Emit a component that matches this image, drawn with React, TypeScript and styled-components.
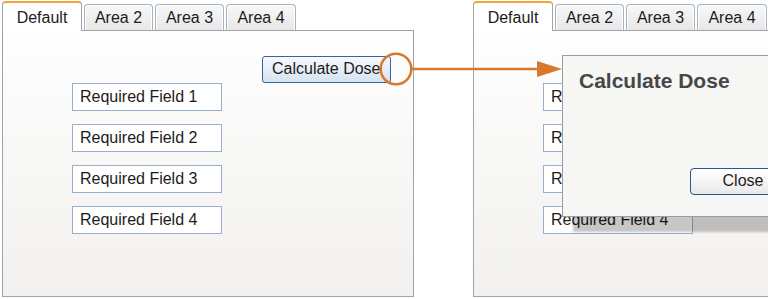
import React from "react";
import styled, { createGlobalStyle } from "styled-components";

const GlobalStyle = createGlobalStyle`
  html, body {
    margin: 0;
    padding: 0;
    background: #ffffff;
    overflow: hidden;
  }
  body {
    font-family: "Liberation Sans", Arial, sans-serif;
    color: #1c1c1c;
  }
`;

const Page = styled.div`
  position: relative;
  width: 768px;
  height: 299px;
  overflow: hidden;
  display: flex;
  gap: 59px;
  padding-left: 2px;
  box-sizing: border-box;
`;

const Panel = styled.div`
  flex: 0 0 412px;
  display: flex;
  flex-direction: column;
`;

const TabStrip = styled.div`
  height: 30px;
  display: flex;
  align-items: flex-end;
  gap: 2px;
`;

const Tab = styled.div<{ $active?: boolean; $width: number }>`
  position: relative;
  box-sizing: border-box;
  width: ${(p) => p.$width}px;
  display: flex;
  justify-content: center;
  font-size: 16px;
  line-height: 18px;
  border-radius: 4px 4px 0 0;
  ${(p) =>
    p.$active
      ? `
    z-index: 1;
    height: 30px;
    margin-bottom: -1px;
    padding-top: 6px;
    background: #ffffff;
    border: 1px solid #a4a4a4;
    border-top: 2px solid #f0a53a;
    border-bottom: none;
  `
      : `
    height: 26px;
    padding-top: 4px;
    background: linear-gradient(#f8f8f8, #e7e7e7);
    border: 1px solid #a6b3c0;
    border-bottom: none;
    box-shadow: inset 1px 1px 0 #ffffff, inset -1px 0 0 #ffffff;
  `}
`;

const Body = styled.div`
  position: relative;
  box-sizing: border-box;
  height: 267px;
  border: 1px solid #a2a2a2;
  background: linear-gradient(#fefefe, #f2f1ef);
  display: flex;
  flex-direction: column;
  padding: 25px 22px 0 69px;
`;

const DoseButton = styled.div`
  align-self: flex-end;
  box-sizing: border-box;
  width: 129px;
  height: 27px;
  border: 1.5px solid #35649f;
  border-radius: 3px;
  background: linear-gradient(#f7f9fc, #d6e2f0);
  font-size: 16px;
  line-height: 24px;
  padding-left: 9px;
  white-space: nowrap;
`;

const FieldList = styled.div`
  display: flex;
  flex-direction: column;
  gap: 13px;
`;

const Field = styled.div`
  box-sizing: border-box;
  width: 150px;
  height: 28px;
  border: 1px solid #98afcb;
  background: #ffffff;
  font-size: 16px;
  line-height: 26px;
  padding-left: 7px;
  white-space: nowrap;
`;

const Dialog = styled.div`
  position: absolute;
  left: 88px;
  top: 24px;
  box-sizing: border-box;
  width: 300px;
  height: 162px;
  border: 1px solid #9c9c9c;
  background: #f6f6f5;
  box-shadow: 11px 15px 2px rgba(0, 0, 0, 0.22);
  display: flex;
  flex-direction: column;
  padding: 13px 0 21px 16px;
`;

const DialogTitle = styled.div`
  font-size: 21px;
  line-height: 24px;
  font-weight: bold;
  color: #474747;
`;

const CloseButton = styled.div`
  margin-top: auto;
  margin-left: 111px;
  box-sizing: border-box;
  width: 106px;
  height: 27px;
  border: 1.5px solid #2f5687;
  border-radius: 4px;
  background: linear-gradient(#ffffff, #e9e9e9);
  font-size: 16px;
  line-height: 24px;
  text-align: center;
`;

const Overlay = styled.svg`
  position: absolute;
  left: 0;
  top: 0;
  pointer-events: none;
  z-index: 5;
`;

const tabs = [
  { label: "Default", width: 80 },
  { label: "Area 2", width: 69 },
  { label: "Area 3", width: 69 },
  { label: "Area 4", width: 70 },
];

const fields = ["Required Field 1", "Required Field 2", "Required Field 3", "Required Field 4"];

const Screen: React.FC<{ withDialog?: boolean }> = ({ withDialog }) => (
  <Panel>
    <TabStrip>
      {tabs.map((t, i) => (
        <Tab key={t.label} $active={i === 0} $width={t.width}>
          {t.label}
        </Tab>
      ))}
    </TabStrip>
    <Body>
      <DoseButton>Calculate Dose</DoseButton>
      <FieldList>
        {fields.map((f) => (
          <Field key={f}>{f}</Field>
        ))}
      </FieldList>
      {withDialog && (
        <Dialog>
          <DialogTitle>Calculate Dose</DialogTitle>
          <CloseButton>Close</CloseButton>
        </Dialog>
      )}
    </Body>
  </Panel>
);

const App: React.FC = () => {
  const orange = "#d8782b";
  return (
    <>
      <GlobalStyle />
      <Page>
        <Screen />
        <Screen withDialog />
        <Overlay width={768} height={299} viewBox="0 0 768 299">
          <circle cx={396} cy={69} r={15.3} fill="none" stroke={orange} strokeWidth={2.5} />
          <line x1={411.5} y1={69} x2={540} y2={69} stroke={orange} strokeWidth={2.5} />
          <polygon points="537,61 562,69 537,77" fill={orange} />
        </Overlay>
      </Page>
    </>
  );
};

export default App;
